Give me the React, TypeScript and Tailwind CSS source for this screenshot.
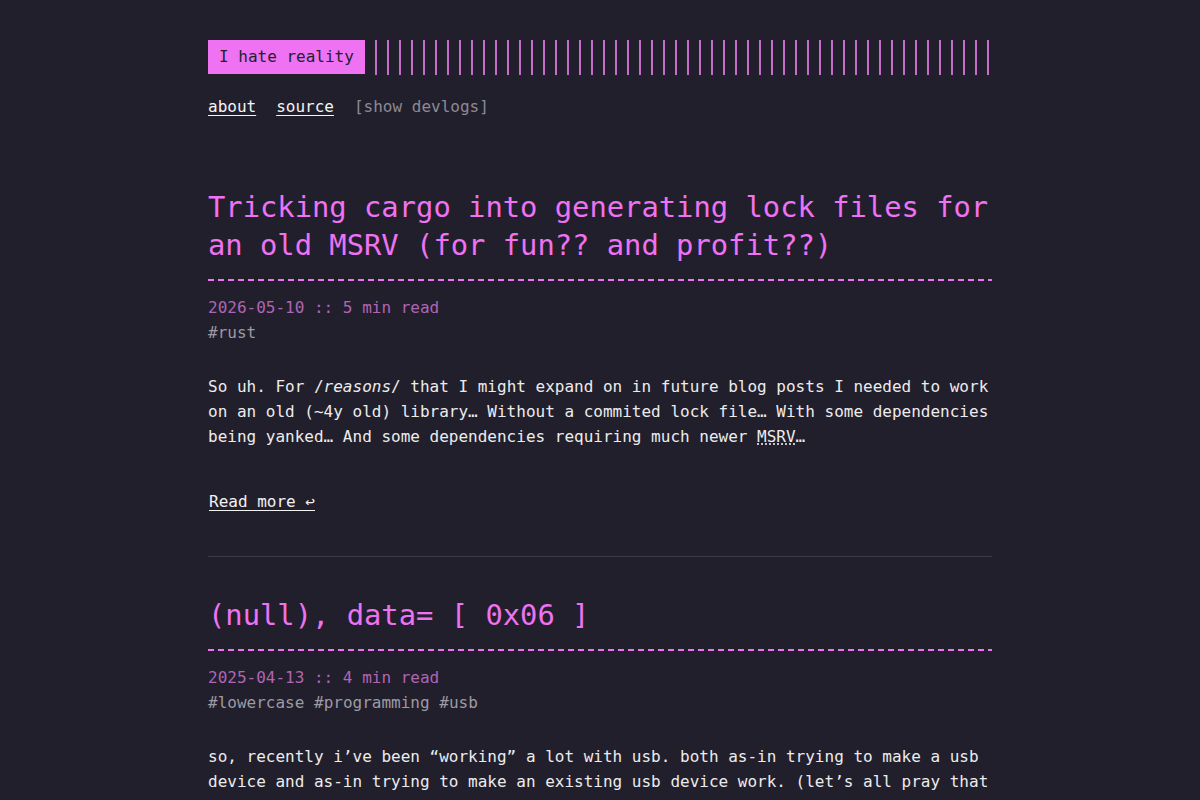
import React from "react";

const mono = { fontFamily: '"DejaVu Sans Mono", "Liberation Mono", monospace' };

type Post = {
  title: string;
  date: string;
  read: string;
  tags: string[];
  body: React.ReactNode;
  more: boolean;
};

const posts: Post[] = [
  {
    title: "Tricking cargo into generating lock files for an old MSRV (for fun?? and profit??)",
    date: "2026-05-10",
    read: "5 min read",
    tags: ["rust"],
    body: (
      <>
        So uh. For /<em className="italic">reasons</em>/ that I might expand on in future blog posts I needed to work
        on an old (~4y old) library… Without a commited lock file… With some dependencies being yanked… And some
        dependencies requiring much newer{" "}
        <abbr title="Minimum Supported Rust Version" className="no-underline underline decoration-dotted underline-offset-2">
          MSRV
        </abbr>
        …
      </>
    ),
    more: true,
  },
  {
    title: "(null), data= [ 0x06 ]",
    date: "2025-04-13",
    read: "4 min read",
    tags: ["lowercase", "programming", "usb"],
    body: (
      <>
        so, recently i’ve been “working” a lot with usb. both as-in trying to make a usb device and as-in trying to
        make an existing usb device work. (let’s all pray that this one day works out, and i get to write about it
        here…)
      </>
    ),
    more: true,
  },
];

function PostCard({ post, last }: { post: Post; last: boolean }) {
  return (
    <article className={last ? "" : "border-b border-[#3b3948] pb-[42px] mb-[39px]"}>
      <h1 className="text-[28.8px] leading-[38px] text-[#ee72f1] pb-[15px]">{post.title}</h1>
      <div className="h-[2px] w-full bg-[repeating-linear-gradient(90deg,#ee72f1_0,#ee72f1_6px,transparent_6px,transparent_10px)]" />
      <div className="mt-[14px] text-[#b065b4]">
        {post.date} :: {post.read}
      </div>
      <div className="text-[#9c9aa3]">
        {post.tags.map((t, i) => (
          <span key={t}>
            {i > 0 ? " " : ""}#{t}
          </span>
        ))}
      </div>
      <p className="mt-[29px] text-[#ececec]">{post.body}</p>
      {post.more && !last && (
        <div className="mt-[40px]">
          <a href="#" className="ml-px text-[#f2f2f2] underline underline-offset-[3px]">
            Read more ↩
          </a>
        </div>
      )}
    </article>
  );
}

export default function App() {
  return (
    <div className="min-h-screen bg-[#221f2d] text-[16px] leading-[25px]" style={mono}>
      <div className="w-[784px] mx-auto pt-[40px]">
        <header>
          <div className="flex items-start">
            <a href="#" className="h-[34px] pt-[4px] px-[11px] bg-[#ee72f1] text-[#221f2d] whitespace-nowrap">
              I hate reality
            </a>
            <div className="ml-[10px] flex-1 h-[35px] bg-[repeating-linear-gradient(90deg,#c46fc9_0,#c46fc9_2px,transparent_2px,transparent_12px)]" />
          </div>
          <nav className="mt-[19px] flex gap-[20px]">
            <a href="#" className="text-[#f4f4f4] underline underline-offset-[3px]">
              about
            </a>
            <a href="#" className="text-[#f4f4f4] underline underline-offset-[3px]">
              source
            </a>
            <span className="text-[#8c8a94]">[show devlogs]</span>
          </nav>
        </header>
        <main className="mt-[69px]">
          {posts.map((p, i) => (
            <PostCard key={p.date} post={p} last={i === posts.length - 1} />
          ))}
        </main>
      </div>
    </div>
  );
}
